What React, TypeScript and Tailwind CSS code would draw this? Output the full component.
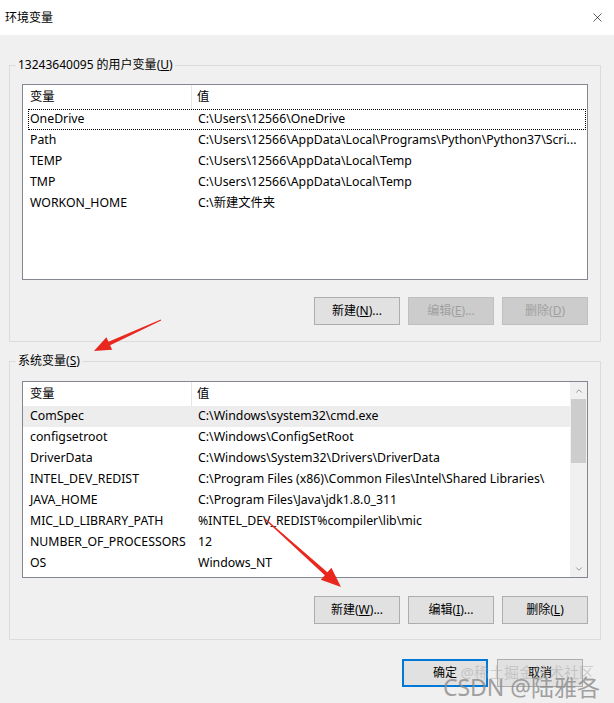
import React from "react";
import { X, ChevronUp, ChevronDown } from "lucide-react";

const userVars = [
  { name: "OneDrive", value: "C:\\Users\\12566\\OneDrive" },
  { name: "Path", value: "C:\\Users\\12566\\AppData\\Local\\Programs\\Python\\Python37\\Scri..." },
  { name: "TEMP", value: "C:\\Users\\12566\\AppData\\Local\\Temp" },
  { name: "TMP", value: "C:\\Users\\12566\\AppData\\Local\\Temp" },
  { name: "WORKON_HOME", value: "C:\\新建文件夹" },
];

const systemVars = [
  { name: "ComSpec", value: "C:\\Windows\\system32\\cmd.exe" },
  { name: "configsetroot", value: "C:\\Windows\\ConfigSetRoot" },
  { name: "DriverData", value: "C:\\Windows\\System32\\Drivers\\DriverData" },
  { name: "INTEL_DEV_REDIST", value: "C:\\Program Files (x86)\\Common Files\\Intel\\Shared Libraries\\" },
  { name: "JAVA_HOME", value: "C:\\Program Files\\Java\\jdk1.8.0_311" },
  { name: "MIC_LD_LIBRARY_PATH", value: "%INTEL_DEV_REDIST%compiler\\lib\\mic" },
  { name: "NUMBER_OF_PROCESSORS", value: "12" },
  { name: "OS", value: "Windows_NT" },
];

// 按钮：label + 带下划线的快捷键
const Btn: React.FC<{ label: string; accel?: string; tail?: string; disabled?: boolean; primary?: boolean }> = ({
  label,
  accel,
  tail = "",
  disabled,
  primary,
}) => (
  <div
    className={`w-[86px] h-[28px] flex items-center justify-center text-[12px] ${
      disabled
        ? "bg-[#cccccc] border border-[#bfbfbf] text-[#a0a0a0]"
        : primary
        ? "bg-[#e1e1e1] border-2 border-[#0078d7] text-black"
        : "bg-[#e1e1e1] border border-[#adadad] text-black"
    }`}
  >
    {label}
    {accel && (
      <>
        (<span className="underline">{accel}</span>){tail}
      </>
    )}
  </div>
);

const Header: React.FC = () => (
  <div className="flex h-[24px] items-center bg-white shrink-0">
    <div className="w-[169px] h-full flex items-center pl-[7px] border-r border-[#e5e5e5]">变量</div>
    <div className="pl-[5px]">值</div>
  </div>
);

const Row: React.FC<{ name: string; value: string; focused?: boolean }> = ({ name, value, focused }) => (
  <div
    className={`flex h-[21px] items-center ml-[5px] mr-[1px] border ${
      focused ? "border-dotted border-black" : "border-transparent"
    }`}
  >
    <div className="w-[169px] pl-[1px] whitespace-nowrap overflow-hidden">{name}</div>
    <div className="flex-1 whitespace-nowrap overflow-hidden">{value}</div>
  </div>
);

const GroupBox: React.FC<{ title: string; accel: string; children: React.ReactNode }> = ({
  title,
  accel,
  children,
}) => (
  <div className="relative border border-[#dcdcdc] px-[12px]">
    <div className="absolute left-[6px] -top-[10px] bg-[#f0f0f0] px-[2px] text-[12px] leading-[18px]">
      {title}(<span className="underline">{accel}</span>)
    </div>
    {children}
  </div>
);

export default function App() {
  return (
    <div className="relative w-[614px] h-[703px] bg-[#f0f0f0] text-black text-[12.3px] font-['Noto_Sans','Noto_Sans_CJK_SC',sans-serif] overflow-hidden">
      {/* 标题栏 */}
      <div className="h-[35px] bg-white flex items-center justify-between pl-[5px] pr-[9px]">
        <span className="text-[12px]">环境变量</span>
        <X size={15} strokeWidth={1} className="text-black" />
      </div>

      <div className="pl-[9px] pr-[13px] pt-[30px]">
        {/* 用户变量 */}
        <GroupBox title="13243640095 的用户变量" accel="U">
          <div className="pt-[18px]">
            <div className="h-[196px] border border-[#828790] bg-white flex flex-col">
              <Header />
              {userVars.map((v, i) => (
                <Row key={v.name} name={v.name} value={v.value} focused={i === 0} />
              ))}
            </div>
          </div>
          <div className="flex justify-end gap-[8px] pt-[17px] pb-[16px]">
            <Btn label="新建" accel="N" tail="..." />
            <Btn label="编辑" accel="E" tail="..." disabled />
            <Btn label="删除" accel="D" disabled />
          </div>
        </GroupBox>

        {/* 系统变量 */}
        <div className="mt-[19px]">
          <GroupBox title="系统变量" accel="S">
            <div className="pt-[19px]">
              <div className="h-[197px] border border-[#828790] bg-white flex">
                <div className="flex-1 flex flex-col overflow-hidden">
                  <Header />
                  {systemVars.map((v, i) => (
                    <div
                      key={v.name}
                      className={`flex h-[21px] items-center ${i === 0 ? "bg-[#ededed]" : ""}`}
                    >
                      <div className="w-[175px] pl-[7px] whitespace-nowrap overflow-hidden">{v.name}</div>
                      <div className="flex-1 whitespace-nowrap overflow-hidden">{v.value}</div>
                    </div>
                  ))}
                </div>
                {/* 滚动条 */}
                <div className="w-[17px] bg-[#f0f0f0] flex flex-col items-center">
                  <div className="h-[17px] flex items-center justify-center text-[#606060]">
                    <ChevronUp size={10} strokeWidth={1.5} />
                  </div>
                  <div className="w-[15px] h-[64px] bg-[#cdcdcd]" />
                  <div className="flex-1" />
                  <div className="h-[17px] flex items-center justify-center text-[#606060]">
                    <ChevronDown size={10} strokeWidth={1.5} />
                  </div>
                </div>
              </div>
            </div>
            <div className="flex justify-end gap-[8px] pt-[18px] pb-[15px]">
              <Btn label="新建" accel="W" tail="..." />
              <Btn label="编辑" accel="I" tail="..." />
              <Btn label="删除" accel="L" />
            </div>
          </GroupBox>
        </div>

        <div className="flex justify-end gap-[9px] pt-[19px] pr-[18px]">
          <Btn label="确定" primary />
          <Btn label="取消" />
        </div>
      </div>

      {/* 红色箭头标注 */}
      <svg className="absolute inset-0 pointer-events-none" width="614" height="703" viewBox="0 0 614 703">
        <polygon
          fill="#e8281e"
          points="161.2,320.5 110.1,345.3 112.2,349.8 94,351 106.4,337.2 108.5,341.7 160.8,319.5"
        />
        <polygon
          fill="#e8281e"
          points="264.7,519.4 324.8,575.2 320.8,579.7 341,587 331.4,567.7 327.4,572.2 265.3,518.6"
        />
      </svg>

      {/* 水印 */}
      <div className="absolute right-[20px] bottom-[20px] text-[15px] text-[#9a9a9a] opacity-40">@稀土掘金技术社区</div>
      <div className="absolute right-[14px] bottom-[2px] text-[23px] leading-[28px] text-[#8c8c8c] opacity-80">
        CSDN @陆雅各
      </div>
    </div>
  );
}
